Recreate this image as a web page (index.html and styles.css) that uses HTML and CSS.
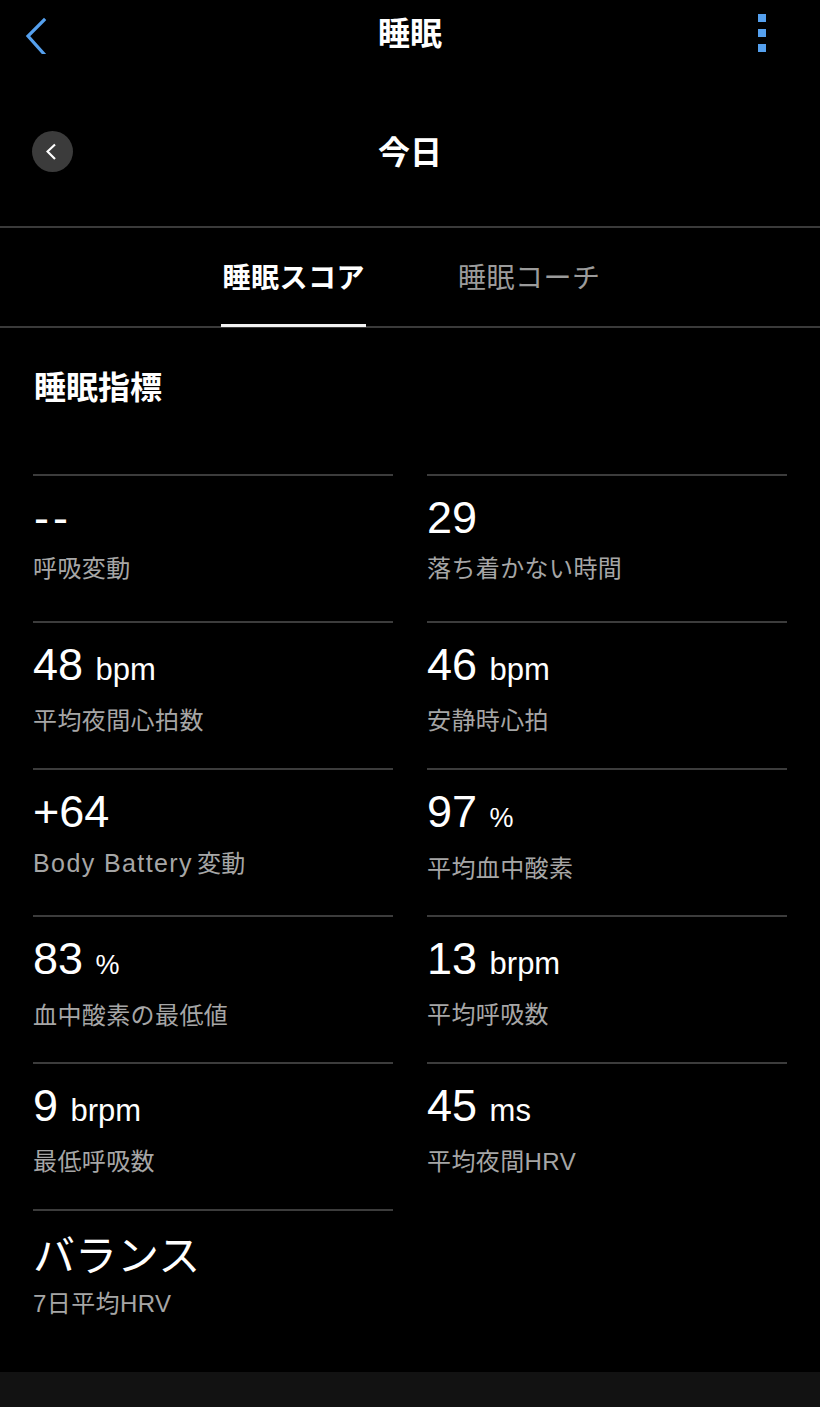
FILE: index.html
```html
<!DOCTYPE html>
<html lang="ja">
<head>
<meta charset="utf-8">
<title>睡眠</title>
<link rel="stylesheet" href="styles.css">
</head>
<body>
<div class="page">
  <header class="topbar">
    <svg class="back" width="40" height="40" viewBox="0 0 40 40"><polyline points="20,6 4,22 20,40" fill="none" stroke="#55a0ee" stroke-width="3.2" stroke-linecap="square" stroke-linejoin="miter"/></svg>
    <h1 class="title">睡眠</h1>
    <div class="kebab"><span></span><span></span><span></span></div>
  </header>

  <div class="datebar">
    <div class="circle-btn">
      <svg width="12" height="18" viewBox="0 0 12 18"><polyline points="9,1.5 1.5,8.5 9,16" fill="none" stroke="#fff" stroke-width="2.2"/></svg>
    </div>
    <div class="date">今日</div>
  </div>

  <nav class="tabs">
    <div class="tab active">睡眠スコア</div>
    <div class="tab">睡眠コーチ</div>
  </nav>

  <main class="content">
    <h2 class="heading">睡眠指標</h2>
    <div class="grid">
      <div class="cell"><div class="value dash">--</div><div class="label">呼吸変動</div></div>
      <div class="cell"><div class="value">29</div><div class="label">落ち着かない時間</div></div>
      <div class="cell"><div class="value">48 <span class="unit">bpm</span></div><div class="label">平均夜間心拍数</div></div>
      <div class="cell"><div class="value">46 <span class="unit">bpm</span></div><div class="label">安静時心拍</div></div>
      <div class="cell"><div class="value">+64</div><div class="label"><span class="latin">Body Battery</span>変動</div></div>
      <div class="cell"><div class="value">97 <span class="pct">%</span></div><div class="label">平均血中酸素</div></div>
      <div class="cell"><div class="value">83 <span class="pct">%</span></div><div class="label">血中酸素の最低値</div></div>
      <div class="cell"><div class="value">13 <span class="unit">brpm</span></div><div class="label">平均呼吸数</div></div>
      <div class="cell"><div class="value">9 <span class="unit">brpm</span></div><div class="label">最低呼吸数</div></div>
      <div class="cell"><div class="value">45 <span class="unit">ms</span></div><div class="label">平均夜間HRV</div></div>
      <div class="cell"><div class="value cjk">バランス</div><div class="label">7日平均HRV</div></div>
    </div>
  </main>

  <footer class="bottombar"></footer>
</div>
</body>
</html>
```

FILE: styles.css
```css
* { box-sizing: border-box; }
html, body { margin: 0; padding: 0; background: #000; }
body {
  font-family: "Liberation Sans", "Noto Sans CJK JP", sans-serif;
  color: #fff;
}
.page { width: 820px; min-height: 1407px; display: flex; flex-direction: column; }

.topbar {
  height: 66px;
  display: flex;
  align-items: center;
  justify-content: space-between;
  padding: 0 54px 0 24px;
  position: relative;
}
.back { display: block; margin-top: 2px; }
.title {
  margin: 0;
  font-family: "Noto Sans CJK JP", sans-serif;
  font-size: 32px;
  font-weight: 700;
  line-height: 40px;
  position: absolute;
  left: 0; right: 0; top: 11px;
  text-align: center;
  pointer-events: none;
}
.kebab { display: flex; flex-direction: column; gap: 6.5px; }
.kebab span { width: 8.5px; height: 8.5px; background: #55a0ee; display: block; }

.datebar {
  height: 162px;
  padding: 65px 0 0 32px;
  display: flex;
  align-items: flex-start;
  position: relative;
  border-bottom: 2px solid #3a3a3a;
}
.circle-btn {
  width: 41px; height: 41px;
  border-radius: 50%;
  background: #3b3b3b;
  display: flex; align-items: center; justify-content: center;
  padding-right: 2px;
}
.date {
  position: absolute;
  left: 0; right: 0; top: 64px;
  text-align: center;
  font-family: "Noto Sans CJK JP", sans-serif;
  font-size: 32px;
  font-weight: 700;
  line-height: 40px;
}

.tabs {
  display: flex;
  justify-content: center;
  gap: 91px;
  border-bottom: 2px solid #3a3a3a;
  padding-left: 3px;
}
.tab {
  font-family: "Noto Sans CJK JP", sans-serif;
  font-size: 28px;
  line-height: 34px;
  padding: 31px 1px 31px;
  color: #9b9b9b;
  border-bottom: 3px solid transparent;
  margin-bottom: -1px;
  letter-spacing: 0.5px;
}
.tab.active { color: #fff; font-weight: 700; border-bottom-color: #f2f2f2; }

.content { padding: 0 33px; flex: 1; }
.heading {
  margin: 37px 0 0 1px;
  font-family: "Noto Sans CJK JP", sans-serif;
  font-size: 32px;
  font-weight: 700;
  line-height: 40px;
}
.grid {
  margin-top: 69px;
  display: grid;
  grid-template-columns: 360px 360px;
  column-gap: 34px;
}
.cell {
  height: 147px;
  border-top: 2px solid #3c3c3c;
  padding-top: 17px;
  display: flex;
  flex-direction: column;
  gap: 11px;
}
.value {
  font-size: 45px;
  line-height: 50px;
  color: #fff;
  white-space: nowrap;
}
.value.dash { letter-spacing: 4px; padding-left: 1px; }
.value.cjk { font-family: "Noto Sans CJK JP", sans-serif; font-size: 42px; }
.unit { font-size: 31px; }
.pct { font-size: 27px; }
.label {
  font-size: 24px;
  line-height: 30px;
  color: #a6a6a6;
  font-family: "Liberation Sans", "Noto Sans CJK JP", sans-serif;
  letter-spacing: 0.4px;
}
.latin { letter-spacing: 1.4px; font-size: 25px; margin-right: 4px; }

.bottombar {
  height: 35px;
  margin-top: 16px;
  background: #121212;
}
```
